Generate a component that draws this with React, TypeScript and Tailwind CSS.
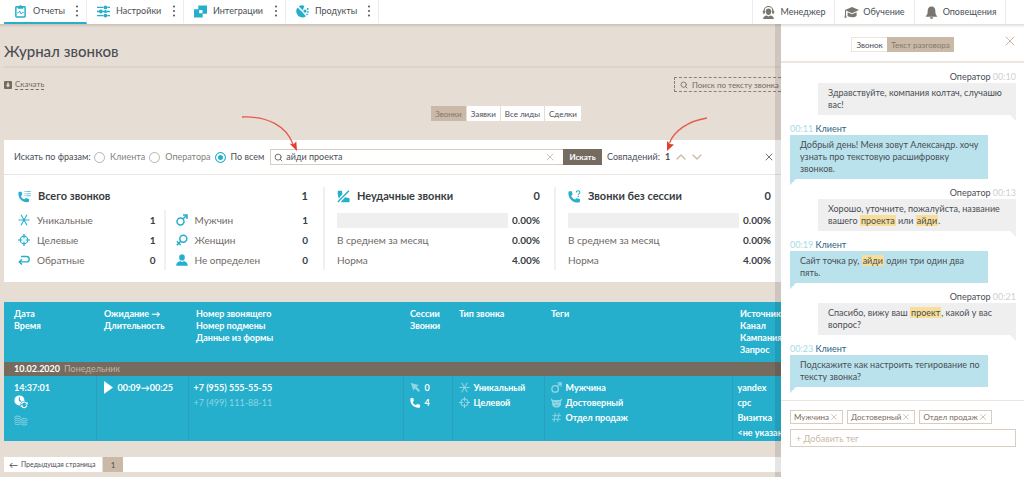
import React from "react";
import { useState } from "react";
import { ChevronDown, ChevronUp, Search, X } from "lucide-react";

type IconProps = {
  className?: string;
};

const ReportIcon = ({ className }: IconProps) => (
  <svg viewBox="0 0 12 14" className={className} fill="none">
    <rect x="1" y="2" width="10" height="11" rx="0.8" stroke="currentColor" strokeWidth="1.6" />
    <path d="M3 4V2h1.4a1.6 1.6 0 0 1 3.2 0H9v2z" fill="currentColor" />
    <path d="M2.5 8.4h1.6l1-2 1.6 3.4 1-1.6h1.8" stroke="currentColor" strokeWidth="1" />
  </svg>
);

const SlidersIcon = ({ className }: IconProps) => (
  <svg viewBox="0 0 12 12" className={className} stroke="currentColor" strokeWidth="1.3" fill="none">
    <path d="M0 2.2h6M9.5 2.2H12M0 6h2M5 6h1.5M9 6h3M0 9.8h6M9.5 9.8H12" />
    <circle cx="7.8" cy="2.2" r="1.1" fill="currentColor" />
    <circle cx="3.5" cy="6" r="1.1" fill="currentColor" />
    <circle cx="7.8" cy="6" r="0.8" fill="currentColor" />
    <circle cx="7.8" cy="9.8" r="1.1" fill="currentColor" />
  </svg>
);

const IntegrationIcon = ({ className }: IconProps) => (
  <svg viewBox="0 0 12 12" className={className} fill="currentColor">
    <path fillRule="evenodd" d="M4 0.5h8v7.5H8v3.500H0v-7.500h4zM4.800 4.500v3.200h3V4.500z" />
  </svg>
);

const ProductIcon = ({ className }: IconProps) => (
  <svg viewBox="0 0 12 12" className={className} fill="currentColor">
    <path d="M2.5 1.2A5.4 5.4 0 0 1 7.8 0.8L6.2 5z" />
    <path d="M1.4 2.2 5.8 6.4 9.2 10.4A5.6 5.6 0 0 1 0.5 7.4 5.6 5.6 0 0 1 1.4 2.2z" />
    <circle cx="8.3" cy="5.6" r="1.5" />
    <circle cx="10.8" cy="3.6" r="0.9" />
    <circle cx="11" cy="6.4" r="0.8" />
    <circle cx="10.2" cy="8.6" r="0.8" />
  </svg>
);

const ManagerIcon = ({ className }: IconProps) => (
  <svg viewBox="0 0 12 13" className={className} fill="currentColor">
    <path d="M1.6 6V4.9a4.4 4.4 0 0 1 8.8 0V6" fill="none" stroke="currentColor" strokeWidth="1.1" />
    <rect x="0.4" y="4.4" width="2" height="3.4" rx="0.8" />
    <rect x="9.6" y="4.4" width="2" height="3.4" rx="0.8" />
    <path d="M3.2 5.2c0-3.6 5.6-3.6 5.6 0 0 2-1.2 3.8-2.8 3.8S3.200 7.200 3.200 5.200z" />
    <path d="M0.600 13c0-2.400 2-3.400 3.600-3.600L6 10.400l1.800-1c1.600.2 3.600 1.200 3.600 3.600z" />
  </svg>
);

const CapIcon = ({ className }: IconProps) => (
  <svg viewBox="0 0 15 12" className={className} fill="currentColor">
    <path d="M8 0.400 15 3.600 8 6.800 1 3.600z" />
    <path d="M3.600 5.800 8 7.800l4.600-2v3.600C11 11 5.400 11 3.600 9.600z" />
    <path d="M1 3.600h1v4.600l.600 3H0.400l.600-3z" />
  </svg>
);

const BellIcon = ({ className }: IconProps) => (
  <svg viewBox="0 0 12 13" className={className} fill="currentColor">
    <path d="M6 0.400C8.600 0.400 9.800 2.400 9.800 4.600c0 3.400.600 4.600 1.800 5.400v.800H.4V10c1.200-.800 1.800-2 1.800-5.400C2.200 2.400 3.400.4 6 .4z" />
    <path d="M4.400 11.300h3.200a1.600 1.600 0 0 1-3.200 0z" />
  </svg>
);

const DownloadIcon = ({ className }: IconProps) => (
  <svg viewBox="0 0 8 8" className={className}>
    <rect width="8" height="8" rx="1" fill="currentColor" />
    <path d="M3.200 1.500h1.600v2.300h1.400L4 6.400 1.800 3.800h1.400z" fill="#e6ddd4" />
  </svg>
);

const Handset = () => (
  <path d="M0.400 2.200Q0.500 1.200 1.400 1.200H3.600L4.200 4.200 3 5.400C3.400 7 4.800 8.400 6.600 8.800L7.800 7.600 11 8.400V10.600Q11 11.600 10 11.600C4.500 12 0 8 0.400 2.200z" />
);

const CallsIcon = ({ className }: IconProps) => (
  <svg viewBox="0 0 13 12" className={className} fill="currentColor">
    <Handset />
    <path
      d="M6.400.6h1.200v1H6.400zM8.300.6h4.500v1H8.300zM6.400 2.700h1.200v1H6.400zM8.300 2.700h4.500v1H8.300zM6.400 4.800h1.200v1H6.400zM8.300 4.800h4.500v1H8.300z"
      opacity="0.7"
    />
  </svg>
);

const FailedCallIcon = ({ className }: IconProps) => (
  <svg viewBox="0 0 12 12" className={className} fill="currentColor">
    <path d="M0.600 1.600Q.6.800 1.400.800H4.600L5 4 3 6 1.800 8.200Q.4 5 .6 1.600zM4.600 9.600 7.600 6.800 11.600 7.600V10.600Q11.600 11.400 10.800 11.400H3.600z" />
    <path d="M0.800 11 11 0.800" stroke="white" strokeWidth="2.600" />
    <path d="M0.800 11 11 0.800" stroke="currentColor" strokeWidth="1.300" />
  </svg>
);

const UnknownCallIcon = ({ className }: IconProps) => (
  <svg viewBox="0 0 12 12" className={className} fill="currentColor">
    <Handset />
    <path
      d="M7.600 2.200c0-2 3.400-2 3.400 0 0 1.200-1.600 1.200-1.600 2.600M9.400 5.600v1.100"
      fill="none"
      stroke="currentColor"
      strokeWidth="1"
    />
  </svg>
);

const PhoneIcon = ({ className }: IconProps) => (
  <svg viewBox="0 0 12 12" className={className} fill="currentColor">
    <Handset />
  </svg>
);

const StarIcon = ({ className }: IconProps) => (
  <svg viewBox="0 0 12 12" className={className} stroke="currentColor" strokeWidth="1.100">
    <path d="M0.500 6h11M3 0.800 9 11.200M9 0.800 3 11.200" />
  </svg>
);

const TargetIcon = ({ className }: IconProps) => (
  <svg viewBox="0 0 12 12" className={className} stroke="currentColor" strokeWidth="1.200" fill="none">
    <circle cx="6" cy="6" r="3.800" />
    <path d="M6 0v4.600M6 7.400V12M0 6h4.600M7.400 6H12" />
  </svg>
);

const ReturnIcon = ({ className }: IconProps) => (
  <svg viewBox="0 0 12 12" className={className} stroke="currentColor" strokeWidth="1.400" fill="none">
    <path d="M3 2.500h5.500a2.700 2.700 0 0 1 0 5.400H1.200M4 5.200 1.200 7.900 4 10.600" />
  </svg>
);

const MaleIcon = ({ className }: IconProps) => (
  <svg viewBox="0 0 12 12" className={className} stroke="currentColor" strokeWidth="1.500" fill="none">
    <circle cx="4.500" cy="7.500" r="3.500" />
    <path d="M7 5 10.800 1.200M7 1h4v4" />
  </svg>
);

const FemaleIcon = ({ className }: IconProps) => (
  <svg viewBox="0 0 12 12" className={className} stroke="currentColor" strokeWidth="1.500" fill="none">
    <circle cx="7.300" cy="4.700" r="3.500" />
    <path d="M4.800 7.200 0.800 11.200M1 7.400l3.600 3.600" />
  </svg>
);

const PersonIcon = ({ className }: IconProps) => (
  <svg viewBox="0 0 12 12" className={className} fill="currentColor">
    <ellipse cx="6" cy="3.400" rx="2.800" ry="3.200" />
    <path d="M0.200 11.800c0-3.200 2.400-4.400 4.200-4.600L6 8l1.600-.8c1.800.2 4.200 1.400 4.200 4.600z" />
  </svg>
);

const ClockIcon = ({ className }: IconProps) => (
  <svg viewBox="0 0 14 14" className={className} fill="none">
    <circle cx="5.400" cy="5.400" r="5" fill="currentColor" />
    <path d="M5.400 2.200v3.400l1.800 1" stroke="#25afcc" strokeWidth="1.100" />
    <circle cx="10.200" cy="9.800" r="3.800" fill="#25afcc" />
    <path d="M7.600 9.200a2.700 2.700 0 0 1 5-.8M12.800 10.400a2.700 2.700 0 0 1-5 .8" stroke="currentColor" strokeWidth="1.200" />
    <path d="M13.600 7v2.400h-2.400zM6.800 12.600v-2.400h2.400z" fill="currentColor" />
  </svg>
);

const CoinsIcon = ({ className }: IconProps) => (
  <svg viewBox="0 0 14 12" className={className} fill="none" stroke="currentColor" strokeWidth="1">
    <ellipse cx="3.600" cy="2.400" rx="3" ry="1.300" />
    <path d="M.6 4.400c0 1.600 6 1.600 6 0M.6 6.400c0 1.600 6 1.600 6 0M.6 8.400c0 1.600 6 1.600 6 0" />
    <ellipse cx="10.200" cy="4.800" rx="3" ry="1.300" />
    <path d="M7.200 6.800c0 1.600 6 1.600 6 0M7.200 8.800c0 1.600 6 1.600 6 0" />
  </svg>
);

const CursorIcon = ({ className }: IconProps) => (
  <svg viewBox="0 0 12 12" className={className} fill="currentColor">
    <path d="M0.800 1.200 9.600 3.200 7.200 5.200 11 9.300 9.400 10.900 5.400 7 3.800 9.600z" />
  </svg>
);

const BeastIcon = ({ className }: IconProps) => (
  <svg viewBox="0 0 12 12" className={className} fill="currentColor">
    <path d="M0.400 0.800c.2 1.600 1 2.200 2.400 2.400h6.400c1.400-.2 2.200-.8 2.400-2.400.8 2.400 0 3.600-.8 4.200v4L8.200 11.400H3.800L1.200 9V5C.4 4.400-.4 3.200.4.800z" />
    <path d="M3 5.400l1.800 1M9 5.400l-1.800 1M4.500 9.200h3" stroke="#25afcc" strokeWidth="0.800" />
  </svg>
);

const HashIcon = ({ className }: IconProps) => (
  <svg viewBox="0 0 12 12" className={className} stroke="currentColor" strokeWidth="1">
    <path d="M4.800 1 3.200 11M8.800 1 7.200 11M1.600 4h9.400M1 8h9.400" />
  </svg>
);

const DotsIcon = () => (
  <svg viewBox="0 0 4 14" className="h-3.5 w-1" fill="#5f6165">
    <circle cx="2" cy="2.500" r="1.100" />
    <circle cx="2" cy="7" r="1.100" />
    <circle cx="2" cy="11.500" r="1.100" />
  </svg>
);

const navItems = [
  { label: "Отчеты", Icon: ReportIcon, width: "w-[83px]", active: true },
  { label: "Настройки", Icon: SlidersIcon, width: "w-[97px]", active: false },
  { label: "Интеграции", Icon: IntegrationIcon, width: "w-[102px]", active: false },
  { label: "Продукты", Icon: ProductIcon, width: "w-[93px]", active: false },
];

const userItems = [
  { label: "Менеджер", Icon: ManagerIcon, width: "w-[82px]" },
  { label: "Обучение", Icon: CapIcon, width: "w-[80px]" },
  { label: "Оповещения", Icon: BellIcon, width: "w-[91px]" },
];

function Header() {
  return (
    <header className="relative z-10 flex h-6 justify-between bg-white pl-1 shadow-[0_1px_2px_1px_rgba(90,75,60,0.18)]">
      <nav className="flex">
        {navItems.map(({ label, Icon, width, active }) => (
          <div
            key={label}
            className={`${width} flex items-center justify-between border-r border-r-[#ececec] border-b-2 pr-[7px] pl-2.5 ${
              active ? "border-b-[#25afcc]" : "border-b-transparent"
            }`}
          >
            <a href="#" className="flex items-center gap-1.5">
              <Icon className="h-[13px] w-[13px] text-[#25afcc]" />
              {label}
            </a>
            <button aria-label={`Меню: ${label}`}>
              <DotsIcon />
            </button>
          </div>
        ))}
      </nav>
      <nav className="mr-[18px] flex border-l border-[#ececec]">
        {userItems.map(({ label, Icon, width }) => (
          <a
            key={label}
            href="#"
            className={`${width} flex items-center justify-center gap-1 border-r border-[#ececec]`}
          >
            <Icon className="h-[13px] w-[15px] text-[#77776f]" />
            {label}
          </a>
        ))}
      </nav>
    </header>
  );
}

const searchScopes = ["Клиента", "Оператора", "По всем"];

function SearchBar() {
  const [scope, setScope] = useState("По всем");
  const [query, setQuery] = useState("айди проекта");

  return (
    <form className="flex h-[35px] items-center border-b border-[#ebe5de] pr-1.5 pl-2.5">
      <fieldset className="mr-0.5 flex items-center">
        <legend className="float-left w-20">Искать по фразам:</legend>
        {searchScopes.map((item) => (
          <label
            key={item}
            className={`mr-1 flex items-center gap-[5px] ${
              scope === item ? "text-[#4a4e54]" : "text-[#85817b]"
            }`}
          >
            <input
              type="radio"
              name="scope"
              checked={scope === item}
              onChange={() => setScope(item)}
              className="h-[11px] w-[11px] appearance-none rounded-full border border-[#b5b5b5] bg-white checked:border-[#25afcc] checked:bg-[#25afcc] checked:shadow-[inset_0_0_0_2px_white]"
            />
            {item}
          </label>
        ))}
      </fieldset>
      <div className="flex h-4 flex-1 items-center border border-r-0 border-[#d9cdbf] px-[3px]">
        <Search className="h-[9px] w-[9px] text-[#6b6b6b]" strokeWidth={2.5} />
        <input
          aria-label="Поиск по фразам"
          value={query}
          onChange={(e) => setQuery(e.target.value)}
          className="min-w-0 flex-1 px-[3px] outline-none"
        />
        <button type="button" aria-label="Очистить" onClick={() => setQuery("")}>
          <X className="mr-1 h-3 w-3 text-[#cfc0af]" />
        </button>
      </div>
      <button type="button" className="h-4 w-[39px] bg-[#756b5f] text-[8px] font-bold text-white">
        Искать
      </button>
      <span className="ml-[5px] w-[58px]">Совпадений:</span>
      <span className="w-2 font-bold">1</span>
      <button type="button" aria-label="Предыдущее">
        <ChevronUp className="h-4 w-4 text-[#cbbba8]" />
      </button>
      <button type="button" aria-label="Следующее">
        <ChevronDown className="h-4 w-4 text-[#cbbba8]" />
      </button>
      <button type="button" aria-label="Закрыть поиск" className="ml-auto pl-[58px]">
        <X className="h-3 w-3 text-[#77716a]" />
      </button>
    </form>
  );
}

type StatProps = {
  label: string;
  value: string;
  Icon?: (props: IconProps) => React.JSX.Element;
};

function StatRow({ label, value, Icon }: StatProps) {
  return (
    <div className="flex h-5 items-center text-[10px]">
      {Icon && <Icon className="mr-[7px] h-3 w-3 text-[#25afcc]" />}
      <span className="flex-1 text-[#6f6a65]">{label}</span>
      <span className="font-bold text-[#383d42]">{value}</span>
    </div>
  );
}

function StatTitle({ label, value, Icon }: Required<StatProps>) {
  return (
    <div className="mb-[5px] flex h-[18px] items-center text-[11px] font-bold text-[#383d42]">
      <Icon className="mr-[7px] h-[13px] w-[13px] text-[#25afcc]" />
      <span className="flex-1">{label}</span>
      <span>{value}</span>
    </div>
  );
}

function RateStat({ label, Icon }: { label: string; Icon: StatProps["Icon"] }) {
  return (
    <section className="border-l-2 border-[#f3efea] pr-3.5 pl-3 last:pr-2.5">
      <StatTitle label={label} value="0" Icon={Icon!} />
      <div className="flex h-5 items-center text-[10px]">
        <div className="h-[15px] flex-1 bg-[#efefef]" />
        <span className="w-8 text-right font-bold text-[#383d42]">0.00%</span>
      </div>
      <StatRow label="В среднем за месяц" value="0.00%" />
      <StatRow label="Норма" value="4.00%" />
    </section>
  );
}

function Stats() {
  return (
    <div className="grid grid-cols-[319fr_231fr_227fr] pt-3 pb-3">
      <section className="pr-[15px] pl-3.5">
        <StatTitle label="Всего звонков" value="1" Icon={CallsIcon} />
        <div className="grid grid-cols-[147fr_142fr]">
          <div className="border-r-2 border-[#f3efea] pr-2">
            <StatRow label="Уникальные" value="1" Icon={StarIcon} />
            <StatRow label="Целевые" value="1" Icon={TargetIcon} />
            <StatRow label="Обратные" value="0" Icon={ReturnIcon} />
          </div>
          <div className="pl-2.5">
            <StatRow label="Мужчин" value="1" Icon={MaleIcon} />
            <StatRow label="Женщин" value="0" Icon={FemaleIcon} />
            <StatRow label="Не определен" value="0" Icon={PersonIcon} />
          </div>
        </div>
      </section>
      <RateStat label="Неудачные звонки" Icon={FailedCallIcon} />
      <RateStat label="Звонки без сессии" Icon={UnknownCallIcon} />
    </div>
  );
}

const columns = [
  { lines: ["Дата", "Время"], className: "w-[92px] pl-2.5" },
  { lines: ["Ожидание →", "Длительность"], className: "w-[92px] pl-2" },
  { lines: ["Номер звонящего", "Номер подмены", "Данные из формы"], className: "pl-2" },
  { lines: ["Сессии", "Звонки"], className: "w-[49px] pl-[7px]" },
  { lines: ["Тип звонка"], className: "w-[92px] pl-[7px]" },
  { lines: ["Теги"], className: "w-[188px] pl-[7px]" },
  { lines: ["Источник", "Канал", "Кампания", "Запрос"], className: "w-[49px] pl-2" },
];

function IconLine({ Icon, text, faded = true }: { Icon: StatProps["Icon"]; text: string; faded?: boolean }) {
  const LineIcon = Icon!;
  return (
    <div className="flex items-center gap-1">
      <LineIcon className={`h-[11px] w-[11px] ${faded ? "text-[#8fd5e4]" : "text-white"}`} />
      {text}
    </div>
  );
}

function CallsTable() {
  return (
    <table className="mt-5 w-full table-fixed bg-[#25afcc] text-left whitespace-nowrap text-white">
      <thead>
        <tr>
          {columns.map((col) => (
            <th key={col.lines[0]} className={`${col.className} py-1.5 align-top leading-3 font-bold`}>
              {col.lines.map((line) => (
                <div key={line}>{line}</div>
              ))}
            </th>
          ))}
        </tr>
      </thead>
      <tbody>
        <tr className="h-3.5 bg-[#756b5f] leading-[14px]">
          <td colSpan={7} className="pl-2.5">
            <span className="mr-1 font-bold">10.02.2020</span>
            <span className="text-[#c2b5a5]">Понедельник</span>
          </td>
        </tr>
        <tr className="h-[65px] align-top leading-[15px] font-bold *:border-l *:border-[#2ba0b8] *:pt-1 *:first:border-l-0">
          <td className="pl-2.5">
            14:37:01
            <ClockIcon className="h-3.5 w-3.5" />
            <CoinsIcon className="mt-1.5 h-3 w-3.5 text-[#8fd5e4]" />
          </td>
          <td className="pl-[7px]">
            <div className="flex items-center gap-[5px]">
              <button aria-label="Прослушать">
                <svg viewBox="0 0 9 13" className="h-[13px] w-[9px]" fill="currentColor">
                  <path d="M0 0 9 6.500 0 13z" />
                </svg>
              </button>
              00:09→00:25
            </div>
          </td>
          <td className="pl-[5px]">
            <div>+7 (955) 555-55-55</div>
            <div className="font-normal text-[#8fd5e4]">+7 (499) 111-88-11</div>
          </td>
          <td className="pl-1.5">
            <IconLine Icon={CursorIcon} text="0" />
            <IconLine Icon={PhoneIcon} text="4" faded={false} />
          </td>
          <td className="pl-1.5">
            <IconLine Icon={StarIcon} text="Уникальный" />
            <IconLine Icon={TargetIcon} text="Целевой" />
          </td>
          <td className="pl-1.5">
            <IconLine Icon={MaleIcon} text="Мужчина" />
            <IconLine Icon={BeastIcon} text="Достоверный" />
            <IconLine Icon={HashIcon} text="Отдел продаж" />
          </td>
          <td className="pl-[5px]">
            <div>yandex</div>
            <div>cpc</div>
            <div>Визитка</div>
            <div>&lt;не указано&gt;</div>
          </td>
        </tr>
      </tbody>
    </table>
  );
}

const Arrows = () => (
  <>
    <svg viewBox="0 0 60 40" className="absolute top-[90px] left-[240px] h-10 w-[60px]" fill="none">
      <path d="M2 3C28 2 46 12 53 30" stroke="#e8584c" strokeWidth="1.300" />
      <path d="M57 37 49.500 29.500 53.500 30.200 56.300 27.500z" fill="#e23d31" />
    </svg>
    <svg viewBox="0 0 50 40" className="absolute top-[90px] left-[660px] h-10 w-[50px]" fill="none">
      <path d="M47 4C28 7 14 17 9.500 29" stroke="#e8584c" strokeWidth="1.300" />
      <path d="M7 37 7 27 10 30 14 30.500z" fill="#e23d31" />
    </svg>
  </>
);

const callTabs = ["Звонки", "Заявки", "Все лиды", "Сделки"];

function Journal() {
  return (
    <main className="relative min-w-0 flex-1 overflow-hidden pl-1">
      <h1 className="flex h-11 items-center border-b-2 border-[#ded3c5] pt-3 text-[15px] font-medium">
        Журнал звонков
      </h1>
      <div className="mt-[9px] flex h-[15px] items-center justify-between">
        <a href="#" className="flex items-center gap-[3px] text-[8px] leading-[9px] text-[#756b5f]">
          <DownloadIcon className="h-2 w-2" />
          <span className="border-b border-dashed border-[#756b5f]">Скачать</span>
        </a>
        <label className="flex h-[15px] w-[107px] items-center gap-1 border border-r-0 border-dashed border-[#8c8175] pl-[5px]">
          <Search className="h-2 w-2 shrink-0 text-[#756b5f]" strokeWidth={2.5} />
          <input
            aria-label="Поиск по тексту звонка"
            placeholder="Поиск по тексту звонка"
            className="w-full min-w-0 text-[8px] outline-none placeholder:text-[#756b5f]"
          />
        </label>
      </div>
      <div className="mt-3.5 ml-[55%] flex gap-px text-[8px]">
        {callTabs.map((tab, i) => (
          <button
            key={tab}
            className={`h-[15px] px-1 ${i === 0 ? "bg-[#c9b9a6] text-[#84786a]" : "bg-white"}`}
          >
            {tab}
          </button>
        ))}
      </div>
      <div className="mt-[19px] bg-white">
        <SearchBar />
        <Stats />
      </div>
      <CallsTable />
      <div className="mt-4 mb-1.5 flex h-[15px] items-stretch bg-white text-[8px]">
        <button className="flex w-[99px] items-center gap-[3px] border-r border-[#e6ddd4] pl-[5px] text-[7px]">
          <span className="text-[9px]">←</span>
          Предыдущая страница
        </button>
        <button className="w-5 bg-[#c9b9a6]">1</button>
      </div>
      <Arrows />
    </main>
  );
}

type Message = {
  time: string;
  operator: boolean;
  text: React.ReactNode;
};

const Hit = ({ children }: { children: React.ReactNode }) => (
  <mark className="bg-[#f8de98] px-px text-inherit">{children}</mark>
);

const messages: Message[] = [
  { time: "00:10", operator: true, text: "Здравствуйте, компания колтач, случашю вас!" },
  {
    time: "00:11",
    operator: false,
    text: "Добрый день! Меня зовут Александр. хочу узнать про текстовую расшифровку звонков.",
  },
  {
    time: "00:13",
    operator: true,
    text: (
      <>
        Хорошо, уточните, пожалуйста, название вашего <Hit>проекта</Hit> или <Hit>айди</Hit>.
      </>
    ),
  },
  {
    time: "00:19",
    operator: false,
    text: (
      <>
        Сайт точка ру, <Hit>айди</Hit> один три один два пять.
      </>
    ),
  },
  {
    time: "00:21",
    operator: true,
    text: (
      <>
        Спасибо, вижу ваш <Hit>проект</Hit>, какой у вас вопрос?
      </>
    ),
  },
  { time: "00:23", operator: false, text: "Подскажите как настроить тегирование по тексту звонка?" },
];

function MessageItem({ message }: { message: Message }) {
  if (message.operator) {
    return (
      <li className="flex flex-col items-end">
        <div>
          Оператор <span className="text-[#cfcfcf]">{message.time}</span>
        </div>
        <p className="w-[198px] bg-[#efefef] py-1 pr-0.5 pl-2.5">{message.text}</p>
        <svg viewBox="0 0 6 6" className="h-1.5 w-1.5" fill="#efefef">
          <path d="M0 0h6v6z" />
        </svg>
      </li>
    );
  }

  return (
    <li className="flex flex-col items-start">
      <div className="text-[#2a6480]">
        <span className="text-[#a5dbe8]">{message.time}</span> Клиент
      </div>
      <p className="w-[198px] bg-[#b9e2ec] py-1 pr-0.5 pl-2.5">{message.text}</p>
      <svg viewBox="0 0 6 6" className="h-1.5 w-1.5" fill="#b9e2ec">
        <path d="M0 0h6L0 6z" />
      </svg>
    </li>
  );
}

const tags = ["Мужчина", "Достоверный", "Отдел продаж"];

function Transcript() {
  return (
    <aside className="relative w-[243px] shrink-0 bg-white">
      <div className="absolute top-0 -left-1.5 h-full w-1.5 bg-black/10" />
      <div className="flex h-[39px] items-center border-b-2 border-[#ede6df] pt-1 text-[8px]">
        <div className="flex flex-1 justify-center">
          <div className="ml-0.5 flex">
            <button className="h-[15px] w-9 border border-r-0 border-[#ebe5de]">Звонок</button>
            <button className="h-[15px] w-[67px] bg-[#c9b9a6] text-[#84786a]">Текст разговора</button>
          </div>
        </div>
        <button aria-label="Закрыть" className="-ml-5 pr-1.5 pb-2">
          <X className="h-4 w-4 text-[#cbb9a5]" strokeWidth={1.5} />
        </button>
      </div>
      <ul className="flex flex-col gap-0.5 pt-2 pr-2 pb-[7px] pl-[9px] leading-3">
        {messages.map((message) => (
          <MessageItem key={message.time} message={message} />
        ))}
      </ul>
      <div className="border-t border-[#ebe5de] pt-[9px] pr-2 pl-[9px]">
        <div className="flex gap-1">
          {tags.map((tag) => (
            <span
              key={tag}
              className="flex h-3.5 items-center border border-[#d9cdbf] px-[3px] text-[8px] text-[#756b5f]"
            >
              {tag}
              <button aria-label={`Удалить тег ${tag}`}>
                <X className="h-2.5 w-2.5 text-[#cbbba8]" />
              </button>
            </span>
          ))}
        </div>
        <input
          aria-label="Добавить тег"
          placeholder="+ Добавить тег"
          className="mt-[5px] h-[18px] w-full border border-[#d9cdbf] px-[5px] outline-none placeholder:text-[#c9b9a6]"
        />
      </div>
    </aside>
  );
}

export default function App() {
  return (
    <div className="flex min-h-screen flex-col bg-[#e6ddd4] font-['Lato','Open_Sans',sans-serif] text-[9px] text-[#4a4e54]">
      <Header />
      <div className="flex flex-1">
        <Journal />
        <Transcript />
      </div>
    </div>
  );
}
